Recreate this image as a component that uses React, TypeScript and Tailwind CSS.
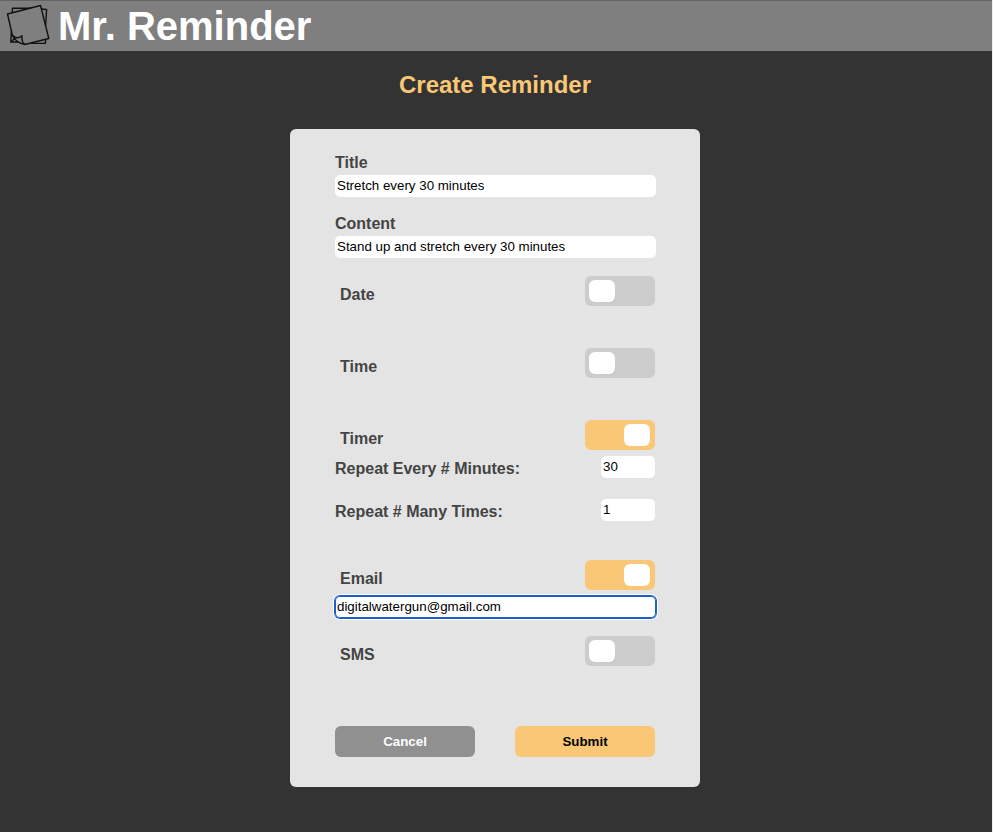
type FieldProps = {
  value: string;
  className?: string;
};

function TextField({ value, className = "w-[321px]" }: FieldProps) {
  return (
    <input
      type="text"
      defaultValue={value}
      className={`block h-[22px] rounded-[5px] bg-white px-[2px] pb-[1px] text-[13.333px] text-black outline-none ${className}`}
    />
  );
}

function ToggleRow({ label, on = false }: { label: string; on?: boolean }) {
  return (
    <div className="flex h-[30px] w-[320px] justify-between pl-[5px]">
      <span className="pt-[10px] leading-[18px]">{label}</span>
      <button
        type="button"
        role="switch"
        aria-checked={on}
        aria-label={label}
        className={`flex h-[30px] w-[70px] items-center rounded-[6px] pl-[4px] pr-[5px] ${
          on ? "justify-end bg-[#f9c775]" : "justify-start bg-[#cccccc]"
        }`}
      >
        <span className="h-[22px] w-[26px] rounded-[6px] bg-white" />
      </button>
    </div>
  );
}

function NumberRow({ label, value }: { label: string; value: string }) {
  return (
    <div className="flex h-[22px] w-[320px] justify-between">
      <span className="pt-[4px] leading-[18px]">{label}</span>
      <TextField value={value} className="w-[54px]" />
    </div>
  );
}

function NotesLogo() {
  return (
    <svg
      width="56"
      height="51"
      viewBox="0 0 56 51"
      fill="none"
      stroke="#111111"
      strokeWidth="1.4"
      strokeLinejoin="round"
    >
      <path d="M12.4 12.5V8.3L31 8.3M41.5 9L46.6 9.5L45.6 26M11.4 31L10.8 42H19M31 43.4H45.3L45.6 40" />
      <path d="M7.5 14L40.5 5.5L48.8 38.5L24.8 44.5C19.2 43.4 14.5 40.3 12.3 35Z" />
      <path d="M12.3 35C15 38.6 18.6 38.6 22 35.8C21.5 39.4 22.4 42.4 24.8 44.5M10.8 42L15 38.3" />
    </svg>
  );
}

export default function App() {
  return (
    <div className="h-[832px] w-full border-r border-[#eeeeee] bg-[#333333] font-['Liberation_Sans',Arial,sans-serif]">
      <header className="flex h-[51px] border-t border-[#626166] bg-[#7f7f7f]">
        <div className="-mt-px w-[58px]">
          <NotesLogo />
        </div>
        <h1 className="pt-[2px] text-[40px] font-bold leading-[46px] text-white">Mr. Reminder</h1>
      </header>
      <main className="mx-auto w-[410px] -translate-x-px">
        <h2 className="h-[78px] pt-[20px] text-center text-[24px] font-bold leading-[28px] text-[#f9c775]">
          Create Reminder
        </h2>
        <form className="h-[658px] rounded-[6px] bg-[#e4e4e4] pl-[45px] pt-[24px] text-[16px] font-bold text-[#444444]">
          <label className="block h-[61px]">
            <span className="block h-[22px] pt-px leading-[18px]">Title</span>
            <div className="font-normal">
              <TextField value="Stretch every 30 minutes" />
            </div>
          </label>
          <label className="block h-[62px]">
            <span className="block h-[22px] pt-px leading-[18px]">Content</span>
            <div className="font-normal">
              <TextField value="Stand up and stretch every 30 minutes" />
            </div>
          </label>
          <div className="flex flex-col gap-[42px]">
            <ToggleRow label="Date" />
            <ToggleRow label="Time" />
            <ToggleRow label="Timer" on />
          </div>
          <div className="flex flex-col gap-[21px] pt-[6px] [&_input]:font-normal">
            <NumberRow label="Repeat Every # Minutes:" value="30" />
            <NumberRow label="Repeat # Many Times:" value="1" />
          </div>
          <div className="pt-[39px]">
            <ToggleRow label="Email" on />
            <div className="pt-[6px] font-normal">
              <TextField
                value="digitalwatergun@gmail.com"
                className="w-[321px] shadow-[0_0_0_1px_#1b60c8,inset_0_0_0_1px_#1b60c8,0_0_0_2px_#ffffff]"
              />
            </div>
          </div>
          <div className="pt-[18px]">
            <ToggleRow label="SMS" />
          </div>
          <div className="flex gap-[40px] pt-[60px] text-[13.333px]">
            <button type="button" className="h-[31px] w-[140px] rounded-[6px] bg-[#909090] text-white">
              Cancel
            </button>
            <button type="button" className="h-[31px] w-[140px] rounded-[6px] bg-[#f9c775] text-black">
              Submit
            </button>
          </div>
        </form>
      </main>
    </div>
  );
}
